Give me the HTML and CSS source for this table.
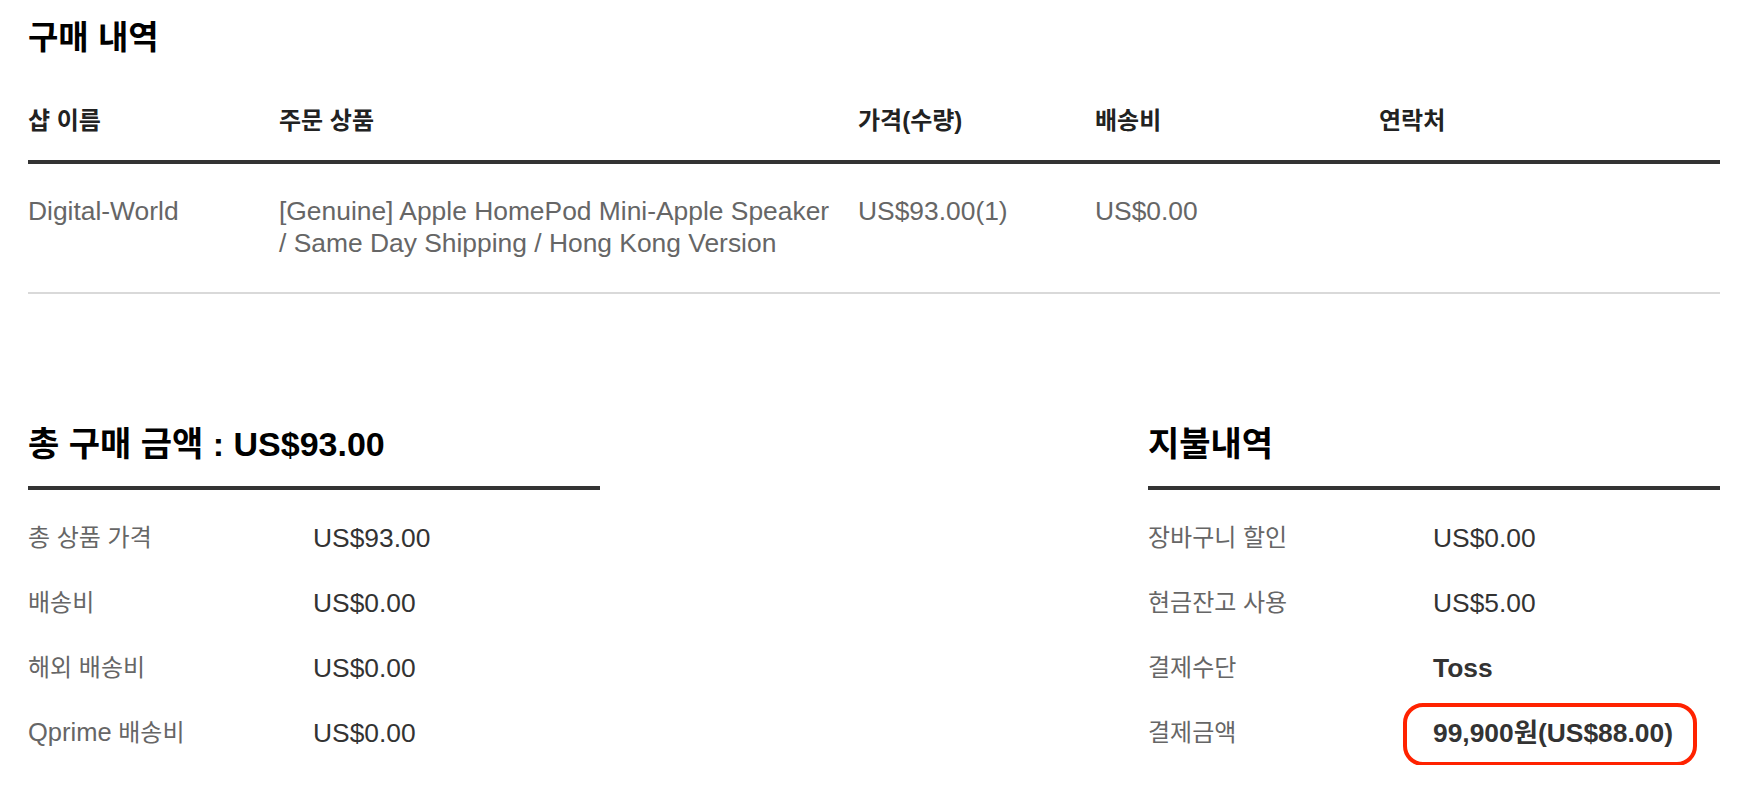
FILE: index.html
```html
<!DOCTYPE html>
<html lang="ko">
<head>
<meta charset="utf-8">
<title>구매 내역</title>
<link rel="stylesheet" href="styles.css">
</head>
<body>
<div class="page">
  <h2 class="title">구매 내역</h2>
  <div class="table">
    <div class="thead">
      <div class="th">샵 이름</div>
      <div class="th">주문 상품</div>
      <div class="th">가격(수량)</div>
      <div class="th">배송비</div>
      <div class="th">연락처</div>
    </div>
    <div class="tr">
      <div class="td">Digital-World</div>
      <div class="td">[Genuine] Apple HomePod Mini-Apple Speaker / Same Day Shipping / Hong Kong Version</div>
      <div class="td">US$93.00(1)</div>
      <div class="td">US$0.00</div>
      <div class="td"></div>
    </div>
  </div>

  <div class="summary">
    <div class="block">
      <h2 class="block-title">총 구매 금액 : US$93.00</h2>
      <div class="list">
        <div class="row"><span class="label">총 상품 가격</span><span class="value">US$93.00</span></div>
        <div class="row"><span class="label">배송비</span><span class="value">US$0.00</span></div>
        <div class="row"><span class="label">해외 배송비</span><span class="value">US$0.00</span></div>
        <div class="row"><span class="label"><span class="latin">Qprime</span> 배송비</span><span class="value">US$0.00</span></div>
      </div>
    </div>
    <div class="block">
      <h2 class="block-title">지불내역</h2>
      <div class="list">
        <div class="row"><span class="label">장바구니 할인</span><span class="value">US$0.00</span></div>
        <div class="row"><span class="label">현금잔고 사용</span><span class="value">US$5.00</span></div>
        <div class="row"><span class="label">결제수단</span><span class="value strong">Toss</span></div>
        <div class="row"><span class="label">결제금액</span><span class="value"><span class="highlight">99,900원(US$88.00)</span></span></div>
      </div>
    </div>
  </div>
</div>
</body>
</html>
```

FILE: styles.css
```css
html, body {
  margin: 0;
  padding: 0;
  background: #ffffff;
}

body {
  font-family: "Liberation Sans", "Noto Sans CJK KR", sans-serif;
  color: #333333;
}

.page {
  padding: 18px 18px 0 28px;
}

.title {
  margin: 0;
  font-size: 33px;
  line-height: 40px;
  font-weight: 700;
  color: #000000;
}

.table {
  margin-top: 48px;
}

.thead,
.tr {
  display: grid;
  grid-template-columns: 251px 579px 237px 284px 1fr;
}

.thead {
  padding-bottom: 24px;
  border-bottom: 4px solid #333333;
}

.th {
  font-size: 24px;
  line-height: 30px;
  font-weight: 700;
  color: #222222;
}

.tr {
  padding: 31px 0 33px;
  border-bottom: 2px solid #d9d9d9;
}

.td {
  font-size: 26.4px;
  line-height: 32px;
  color: #666666;
  padding-right: 20px;
}

.summary {
  margin-top: 130px;
  display: flex;
  justify-content: space-between;
}

.block {
  width: 572px;
}

.block-title {
  margin: 0;
  font-size: 34px;
  line-height: 40px;
  font-weight: 700;
  color: #000000;
  padding-bottom: 22px;
  border-bottom: 4px solid #333333;
}

.list {
  padding-top: 15px;
}

.row {
  display: grid;
  grid-template-columns: 285px 1fr;
  align-items: center;
  height: 65px;
}

.label {
  font-size: 24px;
  line-height: 30px;
  color: #666666;
}

.latin {
  font-size: 25.5px;
}

.value {
  font-size: 26.4px;
  line-height: 30px;
  color: #333333;
}

.strong {
  font-weight: 700;
}

.highlight {
  position: relative;
  display: inline-block;
  font-weight: 700;
}

.highlight::after {
  content: "";
  position: absolute;
  left: -30px;
  right: -24px;
  top: -15px;
  bottom: -18px;
  border: 4px solid #ff2200;
  border-radius: 20px;
}
```
